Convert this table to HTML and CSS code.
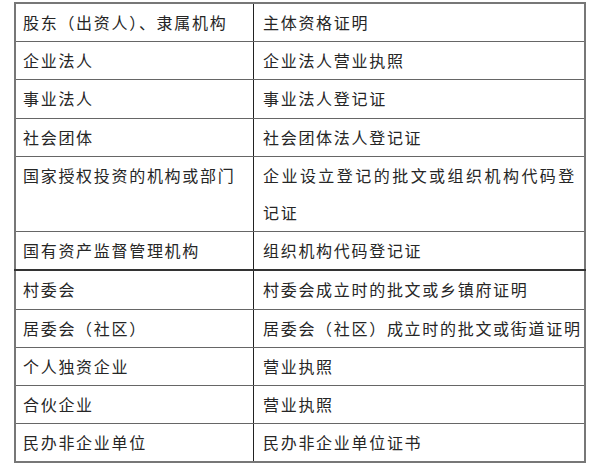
FILE: index.html
```html
<!DOCTYPE html>
<html lang="zh-CN">
<head>
<meta charset="utf-8">
<link rel="stylesheet" href="styles.css">
</head>
<body>
<table class="grid">
  <tr><td class="c1">股东（出资人）、隶属机构</td><td class="c2">主体资格证明</td></tr>
  <tr><td class="c1">企业法人</td><td class="c2">企业法人营业执照</td></tr>
  <tr><td class="c1">事业法人</td><td class="c2">事业法人登记证</td></tr>
  <tr><td class="c1">社会团体</td><td class="c2">社会团体法人登记证</td></tr>
  <tr><td class="c1">国家授权投资的机构或部门</td><td class="c2 wrap">企业设立登记的批文或组织机构代码登记证</td></tr>
  <tr class="thick"><td class="c1">国有资产监督管理机构</td><td class="c2">组织机构代码登记证</td></tr>
  <tr><td class="c1">村委会</td><td class="c2">村委会成立时的批文或乡镇府证明</td></tr>
  <tr><td class="c1">居委会（社区）</td><td class="c2">居委会（社区）成立时的批文或街道证明</td></tr>
  <tr><td class="c1">个人独资企业</td><td class="c2">营业执照</td></tr>
  <tr><td class="c1">合伙企业</td><td class="c2">营业执照</td></tr>
  <tr><td class="c1">民办非企业单位</td><td class="c2">民办非企业单位证书</td></tr>
</table>
</body>
</html>
```
FILE: styles.css
```css
html, body {
  margin: 0;
  padding: 0;
  background: #ffffff;
}
body {
  padding: 2px 0 0 14px;
  font-family: "Noto Sans CJK SC", "Noto Sans", sans-serif;
  color: #262626;
}
.grid {
  border-collapse: collapse;
  width: 572px;
  border: 2px solid #777777;
  table-layout: fixed;
}
.grid td {
  border-top: 1px solid #666666;
  border-bottom: 1px solid #666666;
  font-size: 16px;
  line-height: 37.2px;
  letter-spacing: 1.7px;
  padding: 0;
  vertical-align: top;
  white-space: nowrap;
}
.grid .c1 {
  width: 230px;
  padding-left: 7px;
  border-right: 1px solid #222222;
}
.grid .c2 {
  padding-left: 9px;
}
.grid .wrap {
  white-space: normal;
  text-align: justify;
  padding-right: 8px;
}
.grid .thick td {
  border-bottom: 2px solid #333333;
}
```
